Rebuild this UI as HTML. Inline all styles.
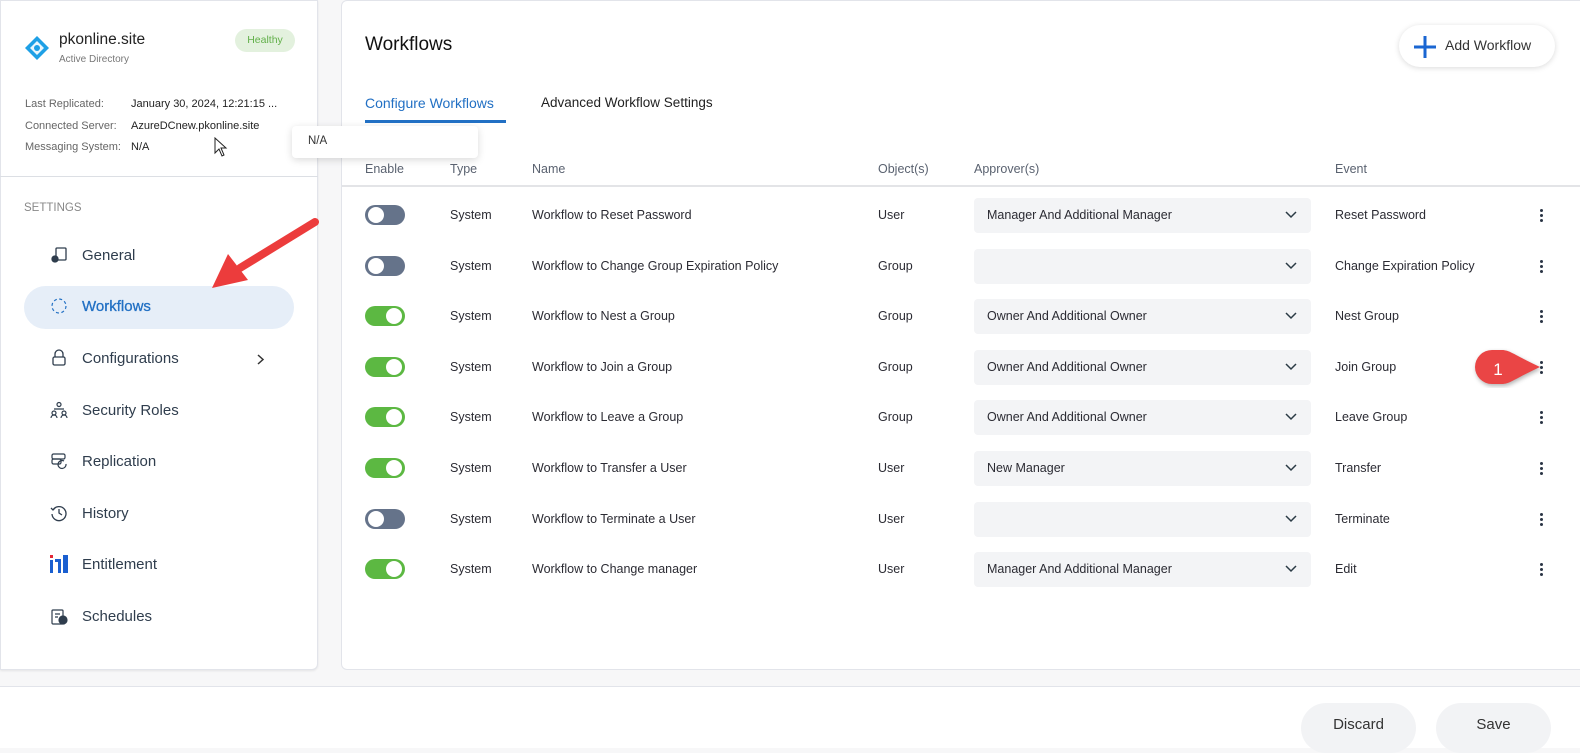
<!DOCTYPE html>
<html><head><meta charset="utf-8"><style>
*{box-sizing:border-box;margin:0;padding:0}
body{width:1580px;height:748px;background:#f7f7f8;font-family:"Liberation Sans",sans-serif;position:relative;overflow:hidden;color:#2b2b33}
.abs{position:absolute}
.left{left:0;top:0;width:318px;height:670px;background:#fff;border:1px solid #e2e4ea;border-radius:0 0 6px 0;box-shadow:0 1px 2px rgba(0,0,0,.08)}
.right{left:341px;top:0;width:1250px;height:670px;background:#fff;border:1px solid #e2e4ea;border-radius:6px}
.footer{left:0;top:686px;width:1580px;height:62px;background:#fff;border-top:1px solid #e2e4ea}
.nav{position:absolute;left:50px;font-size:15px;color:#2f3d4d;display:flex;align-items:center;gap:14px}
.nav svg{width:18px;height:18px}
.hd{position:absolute;top:162px;font-size:12.5px;color:#5a6270}
.cell{position:absolute;font-size:12.5px;color:#2b2b33}
.tog{position:absolute;left:365px;width:40px;height:20px;border-radius:10px}
.tog i{position:absolute;top:2px;width:16px;height:16px;border-radius:50%;background:#fff}
.off{background:#65738a}.off i{left:3px}
.on{background:#5cb842}.on i{right:3px}
.sel{position:absolute;left:974px;width:337px;height:35px;background:#f3f4f6;border-radius:4px;font-size:12.5px;padding:10px 13px;color:#2b2b33}
.sel svg{position:absolute;right:14px;top:13px}
.dots{position:absolute;left:1540px;width:4px}
.dots b{display:block;width:3px;height:3px;border-radius:50%;background:#2a3545;margin-bottom:2px}
.btn{position:absolute;top:703px;width:115px;height:50px;border-radius:25px;background:#f2f3f5;font-size:15px;text-align:center;line-height:44px;color:#333}
</style></head><body>
<div class="abs left"></div>
<div class="abs right"></div>
<div class="abs footer"></div>

<svg class="abs" style="left:24px;top:35px" width="26" height="26" viewBox="0 0 26 26"><path d="M13 1L25 13 13 25 1 13Z" fill="#1ea0e6"/><path d="M13 6L20 13 13 20 6 13Z" fill="#fff" opacity=".9"/><circle cx="13" cy="13" r="3" fill="#1ea0e6"/></svg>
<div class="abs" style="left:59px;top:31px;font-size:15.5px;color:#222">pkonline.site</div>
<div class="abs" style="left:59px;top:54px;font-size:10px;color:#777">Active Directory</div>
<div class="abs" style="left:235px;top:29px;width:60px;height:23px;border-radius:12px;background:#e3f1de;color:#62b04a;font-size:10.5px;text-align:center;line-height:23px">Healthy</div>
<div class="abs" style="left:25px;top:94px;font-size:11px;color:#666;line-height:21.5px">Last Replicated:<br>Connected Server:<br>Messaging System:</div>
<div class="abs" style="left:131px;top:94px;font-size:11px;color:#222;line-height:21.5px">January 30, 2024, 12:21:15 ...<br>AzureDCnew.pkonline.site<br>N/A</div>
<svg class="abs" style="left:214px;top:137px" width="14" height="20" viewBox="0 0 14 20"><path d="M1 1V16L5 12 8 19 10 18 7 11H12Z" fill="#fff" stroke="#222" stroke-width="1"/></svg>
<div class="abs" style="left:292px;top:126px;width:186px;height:32px;background:#fff;border-radius:4px;box-shadow:0 2px 8px rgba(0,0,0,.15);font-size:11.5px;padding:9px 16px;color:#333">N/A</div>
<div class="abs" style="left:0;top:176px;width:318px;height:1px;background:#dcdfe4"></div>
<div class="abs" style="left:24px;top:202px;font-size:11.5px;color:#888">SETTINGS</div>
<div class="abs" style="left:24px;top:286px;width:270px;height:43px;border-radius:22px;background:#e6eef8"></div>

<div class="nav" style="top:246px"><svg viewBox="0 0 18 18" fill="none" stroke="#2f3d4d" stroke-width="1.3"><rect x="6" y="2" width="10" height="12" rx="1"/><circle cx="5" cy="13" r="3" fill="#2f3d4d"/></svg>General</div>
<div class="nav" style="top:297px;color:#2270c4"><svg viewBox="0 0 18 18" fill="none" stroke="#2270c4" stroke-width="1.2"><circle cx="9" cy="9" r="7" stroke-dasharray="3 2.5"/></svg><span style="-webkit-text-stroke:.3px #2270c4">Workflows</span></div>
<div class="nav" style="top:349px"><svg viewBox="0 0 18 18" fill="none" stroke="#2f3d4d" stroke-width="1.3"><path d="M5 8V5a4 4 0 018 0v3"/><rect x="3" y="8" width="12" height="8" rx="1.5"/></svg>Configurations</div>
<svg class="abs" style="left:256px;top:353px" width="9" height="13" viewBox="0 0 9 13"><path d="M2 2l5 4.5L2 11" fill="none" stroke="#333" stroke-width="1.5"/></svg>
<div class="nav" style="top:401px"><svg viewBox="0 0 18 18" fill="none" stroke="#2f3d4d" stroke-width="1.2"><circle cx="9" cy="3.5" r="2"/><circle cx="4" cy="12" r="2"/><circle cx="14" cy="12" r="2"/><path d="M1 17a3 3 0 016 0M11 17a3 3 0 016 0M4 8h10"/></svg>Security Roles</div>
<div class="nav" style="top:452px"><svg viewBox="0 0 18 18" fill="none" stroke="#2f3d4d" stroke-width="1.2"><rect x="2" y="2" width="13" height="5" rx="1.5"/><rect x="2" y="7" width="9" height="5" rx="1.5"/><path d="M16 12a4 4 0 11-2-3"/></svg>Replication</div>
<div class="nav" style="top:504px"><svg viewBox="0 0 18 18" fill="none" stroke="#2f3d4d" stroke-width="1.3"><path d="M3 6a7 7 0 11-1 4M1 4l2 2 2-2M9 5v4l3 2"/></svg>History</div>
<div class="nav" style="top:555px"><svg viewBox="0 0 18 18"><rect x="0" y="0" width="3" height="3" fill="#e32636"/><rect x="0" y="5" width="3" height="13" fill="#1a5fd0"/><path d="M5 4h6v14H8V7H5z" fill="#1a5fd0"/><rect x="13" y="0" width="5" height="18" fill="#1a5fd0"/></svg>Entitlement</div>
<div class="nav" style="top:607px"><svg viewBox="0 0 18 18" fill="none" stroke="#2f3d4d" stroke-width="1.2"><rect x="2" y="3" width="11" height="14" rx="1"/><path d="M5 7h5M5 10h3"/><circle cx="13" cy="13" r="4" fill="#2f3d4d"/></svg>Schedules</div>

<svg class="abs" style="left:200px;top:210px" width="130" height="90" viewBox="0 0 130 90"><path d="M115 12L40 58" stroke="#ec3c3c" stroke-width="8" stroke-linecap="round"/><path d="M12 78L28 44 48 70Z" fill="#ec3c3c"/></svg>

<div class="abs" style="left:365px;top:34px;font-size:19px;color:#111">Workflows</div>
<div class="abs" style="left:1399px;top:25px;width:156px;height:42px;border-radius:21px;background:#fff;box-shadow:0 1px 6px rgba(0,0,0,.15);font-size:14px;color:#333;padding:12px 0 0 46px">Add Workflow</div>
<svg class="abs" style="left:1413px;top:35px" width="24" height="24" viewBox="0 0 24 24"><path d="M12 1v22M1 12h22" stroke="#1a66d2" stroke-width="3"/></svg>
<div class="abs" style="left:365px;top:95px;font-size:14px;color:#2270c4">Configure Workflows</div>
<div class="abs" style="left:365px;top:120px;width:141px;height:3px;background:#2270c4"></div>
<div class="abs" style="left:541px;top:95px;font-size:13.5px;color:#222">Advanced Workflow Settings</div>

<div class="hd" style="left:365px">Enable</div>
<div class="hd" style="left:450px">Type</div>
<div class="hd" style="left:532px">Name</div>
<div class="hd" style="left:878px">Object(s)</div>
<div class="hd" style="left:974px">Approver(s)</div>
<div class="hd" style="left:1335px">Event</div>
<div class="abs" style="left:342px;top:185px;width:1238px;height:2px;background:#e3e4e7"></div>

<div id="rows"></div>
<script>
const rows=[
["off","Workflow to Reset Password","User","Manager And Additional Manager","Reset Password"],
["off","Workflow to Change Group Expiration Policy","Group","","Change Expiration Policy"],
["on","Workflow to Nest a Group","Group","Owner And Additional Owner","Nest Group"],
["on","Workflow to Join a Group","Group","Owner And Additional Owner","Join Group"],
["on","Workflow to Leave a Group","Group","Owner And Additional Owner","Leave Group"],
["on","Workflow to Transfer a User","User","New Manager","Transfer"],
["off","Workflow to Terminate a User","User","","Terminate"],
["on","Workflow to Change manager","User","Manager And Additional Manager","Edit"]];
let h="";
rows.forEach((r,i)=>{const c=215+i*50.6;
h+=`<div class="tog ${r[0]}" style="top:${c-10}px"><i></i></div>
<div class="cell" style="left:450px;top:${c-7}px">System</div>
<div class="cell" style="left:532px;top:${c-7}px">${r[1]}</div>
<div class="cell" style="left:878px;top:${c-7}px">${r[2]}</div>
<div class="sel" style="top:${c-17}px">${r[3]}<svg width="12" height="8" viewBox="0 0 12 8"><path d="M1 1l5 5 5-5" fill="none" stroke="#2a3a45" stroke-width="1.5"/></svg></div>
<div class="cell" style="left:1335px;top:${c-7}px">${r[4]}</div>
<div class="dots" style="top:${c-6}px"><b></b><b></b><b></b></div>`;});
document.getElementById("rows").innerHTML=h;
</script>

<svg class="abs" style="left:1472px;top:348px" width="70" height="40" viewBox="0 0 70 40"><path d="M20 2h10c8 0 14 6 38 17C44 30 38 36 30 36H20a17 17 0 010-34z" fill="#ea4545" filter="drop-shadow(1px 2px 2px rgba(0,0,0,.3))"/><text x="26" y="27" font-family="Liberation Sans" font-size="17" fill="#fff" text-anchor="middle">1</text></svg>

<div class="btn" style="left:1301px">Discard</div>
<div class="btn" style="left:1436px">Save</div>
</body></html>
